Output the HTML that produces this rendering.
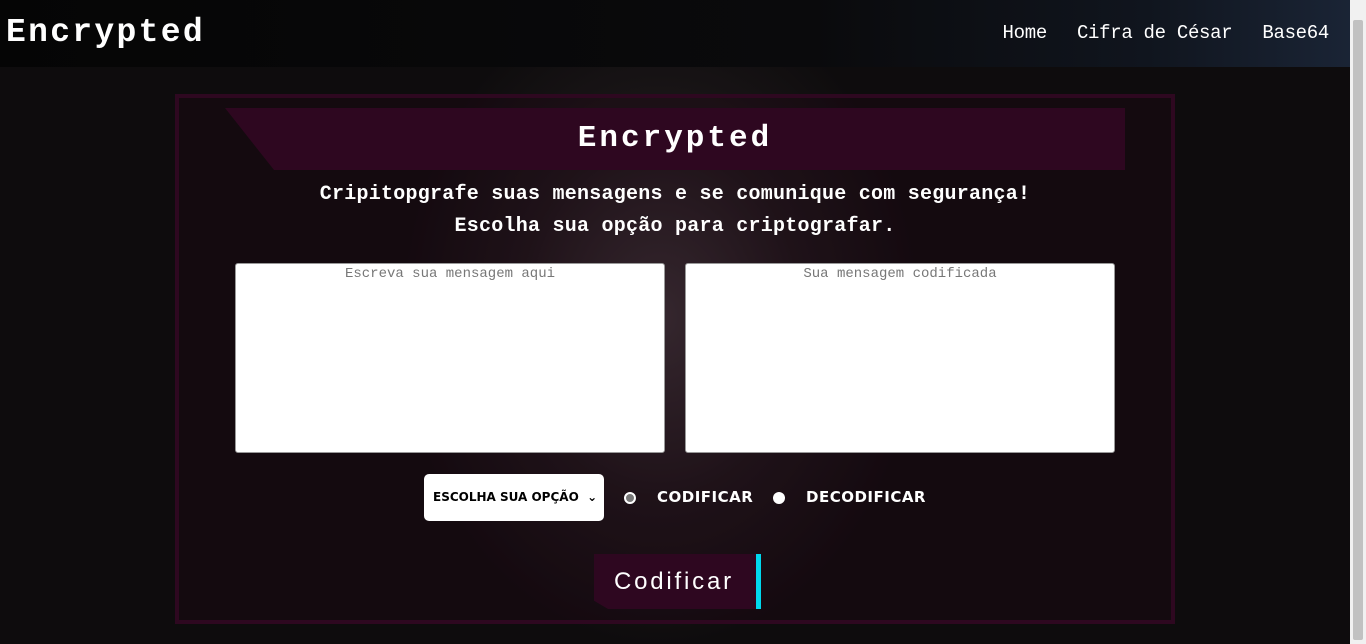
<!DOCTYPE html>
<html><head><meta charset="utf-8"><style>
*{box-sizing:border-box;margin:0;padding:0}
body{width:1366px;height:644px;overflow:hidden;background:#0b0a0b;font-family:"Liberation Mono",monospace;color:#fff;position:relative}
.bg{position:absolute;left:0;top:67px;width:1350px;height:577px;background:radial-gradient(ellipse 260px 330px at 660px 250px,#3a3336 0%,#1c1719 55%,#0e0c0d 100%)}
.hdr{position:absolute;left:0;top:0;width:1350px;height:67px;background:linear-gradient(90deg,#050505 0%,#0a0a0c 60%,#10151e 85%,#1a2435 100%)}
.logo{position:absolute;left:6px;top:14px;font-size:33px;font-weight:bold;letter-spacing:2.3px}
.nav{position:absolute;right:37px;top:22px;font-size:19px;letter-spacing:-0.3px}
.nav span{margin-left:30px}
.sb{position:absolute;right:0;top:0;width:16px;height:644px;background:#f1f1f1}
.sb:before{content:"";position:absolute;left:3px;top:20px;width:10px;height:620px;background:#c1c1c1;border-radius:2px}
.box{position:absolute;left:175px;top:94px;width:1000px;height:530px;border:4px solid #2e0820;background:rgba(40,5,25,0.25)}
.ban{position:absolute;left:225px;top:108px;width:900px;height:62px;background:#2e0720;clip-path:polygon(0 0,100% 0,100% 100%,49px 100%);text-align:center;font-size:31px;font-weight:bold;line-height:62px;letter-spacing:3px}
.sub{position:absolute;left:0;width:1350px;text-align:center;font-size:20px;font-weight:bold;letter-spacing:0.25px}
.ta{position:absolute;top:263px;width:430px;height:190px;background:#fff;border:1px solid #999;border-radius:3px;color:#777;font-size:14px;text-align:center;padding-top:2px}
.sel{position:absolute;left:424px;top:474px;width:180px;height:47px;background:#fff;border-radius:5px;color:#000;font-family:"DejaVu Sans",sans-serif;font-weight:bold;font-size:12px;line-height:47px;padding-left:9px}
.r{position:absolute;top:492px;width:12px;height:12px;border-radius:50%}
.lab{position:absolute;top:488px;font-family:"DejaVu Sans",sans-serif;font-weight:bold;font-size:15px;letter-spacing:0.5px}
.btn{position:absolute;left:594px;top:554px;width:167px;height:55px;background:#2e0720;border-right:5px solid #00d8ee;clip-path:polygon(0 0,100% 0,100% 100%,14px 100%,0 85%);font-family:"Liberation Sans",sans-serif;font-size:24px;letter-spacing:2.8px;line-height:55px;padding-left:20px}
</style></head><body>
<div class="bg"></div>
<div class="hdr"></div>
<div class="logo">Encrypted</div>
<div class="nav"><span>Home</span><span>Cifra de César</span><span>Base64</span></div>
<div class="box"></div>
<div class="ban">Encrypted</div>
<div class="sub" style="top:183px">Cripitopgrafe suas mensagens e se comunique com segurança!</div>
<div class="sub" style="top:215px">Escolha sua opção para criptografar.</div>
<div class="ta" style="left:235px">Escreva sua mensagem aqui</div>
<div class="ta" style="left:685px">Sua mensagem codificada</div>
<div class="sel">ESCOLHA SUA OPÇÃO &nbsp;⌄</div>
<div class="r" style="left:624px;border:2px solid #fff;background:#777"></div>
<div class="lab" style="left:657px">CODIFICAR</div>
<div class="r" style="left:773px;background:#fff"></div>
<div class="lab" style="left:806px">DECODIFICAR</div>
<div class="btn">Codificar</div>
<div class="sb"></div>
</body></html>
